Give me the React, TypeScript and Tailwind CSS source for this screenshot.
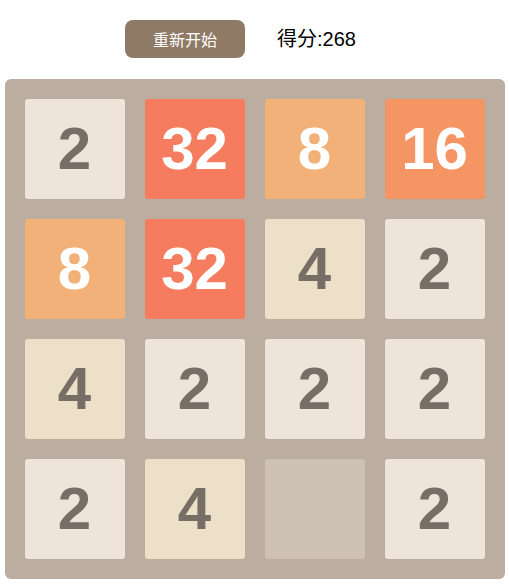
import React from "react";

const grid: number[][] = [
  [2, 32, 8, 16],
  [8, 32, 4, 2],
  [4, 2, 2, 2],
  [2, 4, 0, 2],
];

const tileStyles: Record<number, string> = {
  0: "bg-[#cdc1b4]",
  2: "bg-[#eee4da] text-[#776e65]",
  4: "bg-[#ede0c8] text-[#776e65]",
  8: "bg-[#f2b179] text-white",
  16: "bg-[#f59563] text-white",
  32: "bg-[#f67c5f] text-white",
};

function Tile({ value }: { value: number }) {
  return (
    <div
      className={`flex h-[100px] w-[100px] items-center justify-center rounded-[3px] text-[60px] font-bold leading-none ${tileStyles[value]}`}
      style={{ fontFamily: '"Liberation Sans", Arial, sans-serif' }}
    >
      {value > 0 ? value : ""}
    </div>
  );
}

export default function App() {
  return (
    <div
      className="min-h-screen w-[509px] bg-white"
      style={{ fontFamily: '"Liberation Sans", "Noto Sans CJK SC", sans-serif' }}
    >
      <div className="flex items-center pt-5">
        <button
          type="button"
          className="ml-[125px] flex h-[38px] w-[120px] items-center justify-center rounded-lg bg-[#8f7a66] text-base text-white"
          style={{ fontFamily: '"Noto Sans CJK SC", sans-serif' }}
        >
          重新开始
        </button>
        <span className="ml-8 text-[20px] text-black">得分:268</span>
      </div>

      <div className="mx-auto mt-[21px] grid w-[500px] grid-cols-4 gap-5 rounded-md bg-[#bbada0] p-5">
        {grid.flat().map((v, i) => (
          <Tile key={i} value={v} />
        ))}
      </div>
    </div>
  );
}
